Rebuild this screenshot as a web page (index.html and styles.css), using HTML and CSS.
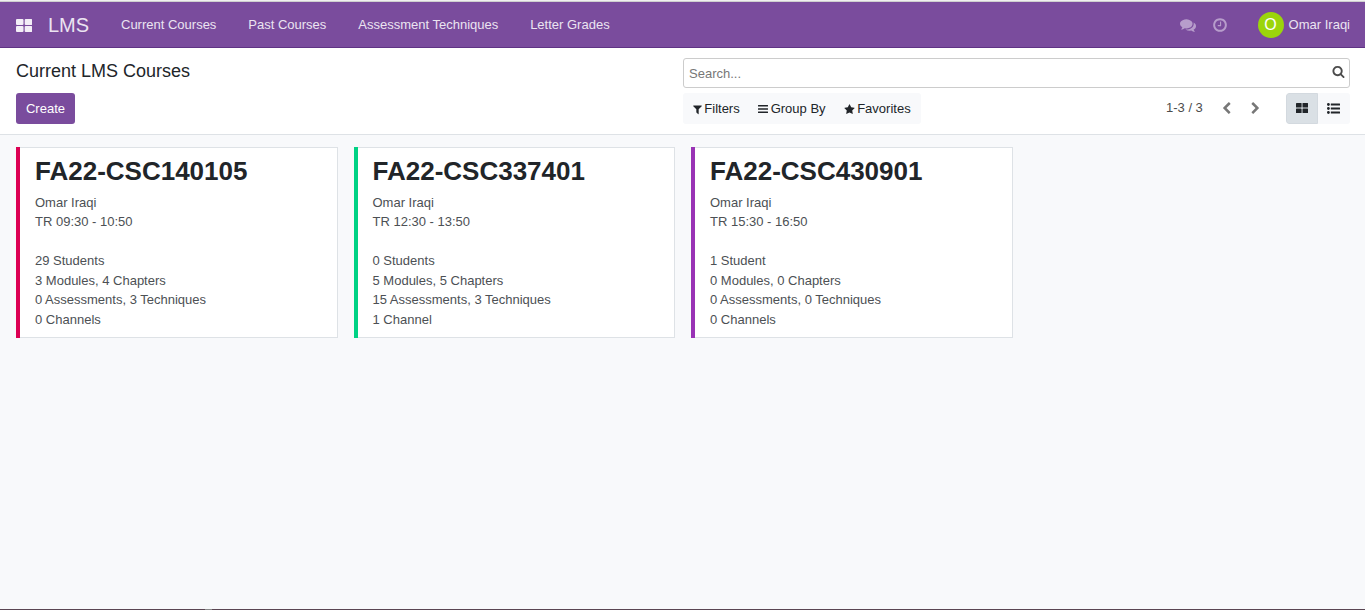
FILE: index.html
```html
<!DOCTYPE html>
<html lang="en">
<head>
<meta charset="utf-8">
<title>Current LMS Courses</title>
<link rel="stylesheet" href="styles.css">
</head>
<body>
<svg class="sprite" aria-hidden="true">
<symbol id="apps-grid" viewBox="0 0 16 13"><rect width="7.500" height="6" rx="1"/><rect x="8.700" width="7.500" height="6" rx="1"/><rect y="7" width="7.500" height="6" rx="1"/><rect x="8.700" y="7" width="7.500" height="6" rx="1"/></symbol>
<symbol id="view-grid" viewBox="0 0 12 10"><rect width="5.600" height="4.600" rx=".6"/><rect x="6.500" width="5.600" height="4.600" rx=".6"/><rect y="5.500" width="5.600" height="4.500" rx=".6"/><rect x="6.500" y="5.500" width="5.600" height="4.500" rx=".6"/></symbol>
<symbol id="comments" viewBox="0 0 1792 1792"><path d="M1408 768q0 139-94 257t-256.500 186.500-353.500 68.500q-86 0-176-16-124 88-278 128-36 9-86 16h-3q-11 0-20.500-8t-11.500-21q-1-3-1-6.500t.5-6.500 2-6l2.500-5 3.500-5.500 4-5 4.500-5 4-4.500q5-6 23-25t26-29.500 22.500-29 25-38.500 20.500-44q-124-72-195-177t-71-224q0-139 94-257t256.500-186.500 353.500-68.500 353.500 68.500 256.500 186.500 94 257zm384 256q0 120-71 224.500t-195 176.500q10 24 20.500 44t25 38.500 22.500 29 26 29.500 23 25q1 1 4 4.500t4.500 5 4 5 3.500 5.500l2.500 5 2 6 .5 6.500-1 6.500q-3 14-13 22t-22 7q-50-7-86-16-154-40-278-128-90 16-176 16-271 0-472-132 58 4 88 4 161 0 309-45t264-129q125-92 192-212t67-254q0-77-23-152 129 71 204 178t75 230z"/></symbol>
<symbol id="clock" viewBox="0 0 1792 1792"><path d="M1024 544v448q0 14-9 23t-23 9h-320q-14 0-23-9t-9-23v-64q0-14 9-23t23-9h224v-352q0-14 9-23t23-9h64q14 0 23 9t9 23zm416 352q0-148-73-273t-198-198-273-73-273 73-198 198-73 273 73 273 198 198 273 73 273-73 198-198 73-273zm224 0q0 209-103 385.500t-279.500 279.500-385.500 103-385.500-103-279.500-279.500-103-385.500 103-385.500 279.500-279.500 385.500-103 385.500 103 279.500 279.500 103 385.500z"/></symbol>
<symbol id="filter" viewBox="0 0 1792 1792"><path d="M1595 295q17 41-14 70l-493 493v742q0 42-39 59-13 5-25 5-27 0-45-19l-256-256q-19-19-19-45v-486l-493-493q-31-29-14-70 17-39 59-39h1280q42 0 59 39z"/></symbol>
<symbol id="lines" viewBox="0 0 10 10"><rect y="1" width="10" height="1.600" rx=".3"/><rect y="4.200" width="10" height="1.600" rx=".3"/><rect y="7.400" width="10" height="1.600" rx=".3"/></symbol>
<symbol id="star" viewBox="0 0 1792 1792"><path d="M1728 647q0 22-26 48l-363 354 86 500q1 7 1 20 0 21-10.500 35.500t-30.500 14.500q-19 0-40-12l-449-236-449 236q-22 12-40 12-21 0-31.500-14.500t-10.500-35.500q0-6 2-20l86-500-364-354q-25-27-25-48 0-37 56-46l502-73 225-455q19-41 49-41t49 41l225 455 502 73q56 9 56 46z"/></symbol>
<symbol id="search" viewBox="0 0 1792 1792"><path d="M1216 832q0-185-131.500-316.500t-316.500-131.500-316.500 131.500-131.500 316.500 131.500 316.500 316.500 131.500 316.500-131.500 131.500-316.500zm512 832q0 52-38 90t-90 38q-54 0-90-38l-343-342q-179 124-399 124-143 0-273.500-55.500t-225-150-150-225-55.500-273.500 55.500-273.500 150-225 225-150 273.500-55.500 273.500 55.500 225 150 150 225 55.500 273.500q0 220-124 399l343 343q37 37 37 90z"/></symbol>
<symbol id="chevron" viewBox="0 0 1792 1792"><path d="M1427 301l-531 531 531 531q19 19 19 45t-19 45l-166 166q-19 19-45 19t-45-19l-742-742q-19-19-19-45t19-45l742-742q19-19 45-19t45 19l166 166q19 19 19 45t-19 45z"/></symbol>
<symbol id="list" viewBox="0 0 13 11"><circle cx="1.400" cy="1.500" r="1.400"/><circle cx="1.400" cy="5.500" r="1.400"/><circle cx="1.400" cy="9.500" r="1.400"/><rect x="3.800" y=".6" width="9.200" height="1.800" rx=".2"/><rect x="3.800" y="4.600" width="9.200" height="1.800" rx=".2"/><rect x="3.800" y="8.600" width="9.200" height="1.800" rx=".2"/></symbol>
</svg>
<header class="navbar">
  <svg class="apps"><use href="#apps-grid"/></svg>
  <span class="brand">LMS</span>
  <nav class="menu"><a>Current Courses</a><a>Past Courses</a><a>Assessment Techniques</a><a>Letter Grades</a></nav>
  <div class="systray">
    <svg class="tray-icon"><use href="#comments"/></svg>
    <svg class="tray-icon"><use href="#clock"/></svg>
    <span class="avatar">O</span><span class="user">Omar Iraqi</span>
  </div>
</header>
<section class="control-panel">
  <div class="panel-left">
    <h1 class="title">Current LMS Courses</h1>
    <button class="create">Create</button>
  </div>
  <div class="panel-right">
    <div class="searchbox"><span>Search...</span><svg class="search-icon"><use href="#search"/></svg></div>
    <div class="tools">
      <div class="filters">
        <span class="filter"><svg class="filter-icon"><use href="#filter"/></svg>Filters</span>
        <span class="filter"><svg class="group-icon"><use href="#lines"/></svg>Group By</span>
        <span class="filter"><svg class="star-icon"><use href="#star"/></svg>Favorites</span>
      </div>
      <span class="pager">1-3 / 3</span>
      <svg class="chevron"><use href="#chevron"/></svg>
      <svg class="chevron next"><use href="#chevron"/></svg>
      <div class="views">
        <span class="view active"><svg class="grid-icon"><use href="#view-grid"/></svg></span>
        <span class="view"><svg class="list-icon"><use href="#list"/></svg></span>
      </div>
    </div>
  </div>
</section>
<main class="kanban">
  <article class="card red"><h2>FA22-CSC140105</h2><p>Omar Iraqi</p><p>TR 09:30 - 10:50</p><p class="spaced">29 Students</p><p>3 Modules, 4 Chapters</p><p>0 Assessments, 3 Techniques</p><p>0 Channels</p></article>
  <article class="card green"><h2>FA22-CSC337401</h2><p>Omar Iraqi</p><p>TR 12:30 - 13:50</p><p class="spaced">0 Students</p><p>5 Modules, 5 Chapters</p><p>15 Assessments, 3 Techniques</p><p>1 Channel</p></article>
  <article class="card purple"><h2>FA22-CSC430901</h2><p>Omar Iraqi</p><p>TR 15:30 - 16:50</p><p class="spaced">1 Student</p><p>0 Modules, 0 Chapters</p><p>0 Assessments, 0 Techniques</p><p>0 Channels</p></article>
</main>
<footer class="bottom-edge"><span class="edge-mark"></span></footer>
</body>
</html>
```
FILE: styles.css
```css
* { box-sizing: border-box; }
body {
  margin: 0;
  height: 610px;
  display: flex;
  flex-direction: column;
  overflow: hidden;
  background: #f8f9fb;
  color: #4c4c4c;
  font: 13px/19.5px "Liberation Sans", Arial, sans-serif;
}
svg { fill: currentColor; flex: none; display: block; overflow: visible; }
.sprite { display: none; }
.navbar {
  height: 48px;
  border-top: 1px solid #f0f0f0;
  border-bottom: 1px solid #5f3384;
  background: #7a4c9d;
  box-shadow: inset 0 1px #cfcfcf;
  display: flex;
  align-items: center;
  padding: 1px 15px 0 16px;
  color: #ebe4f1;
}
.apps { width: 16px; height: 13px; color: #f3eef7; margin-top: 2px; }
.brand { font-size: 20px; margin-left: 16px; margin-top: 2px; width: 41px; }
.menu { display: flex; gap: 31.93px; margin-left: 32px; }
.systray { margin-left: auto; display: flex; align-items: center; color: #ebe4f1; }
.tray-icon { width: 16px; height: 16px; margin-right: 16px; color: #b79dcb; }
.avatar {
  width: 26px;
  height: 26px;
  border-radius: 50%;
  background: #9bd50b;
  color: #fff;
  font-size: 16px;
  line-height: 26px;
  text-align: center;
  margin: 0 5px 0 14px;
}
.control-panel {
  height: 87px;
  flex: none;
  background: #fff;
  border-bottom: 1px solid #dee2e6;
  display: grid;
  grid-template-columns: 667px 667px;
  padding: 10px 16px 0;
}
.panel-left { display: flex; flex-direction: column; align-items: flex-start; }
.title { margin: 0; font-size: 18px; font-weight: 400; line-height: 27px; color: #212529; }
.create {
  margin-top: 8px;
  width: 59px;
  height: 31px;
  padding: 0;
  border: 0;
  border-radius: 3px;
  background: #7a4c9d;
  color: #fff;
  font: inherit;
}
.searchbox {
  height: 30px;
  border: 1px solid #ccc;
  border-radius: 3px;
  padding: 1px 4.5px 0 5px;
  display: flex;
  align-items: center;
  justify-content: space-between;
  color: #777;
}
.search-icon { width: 13px; height: 13px; color: #4c4c4c; margin-top: -4px; }
.tools { display: flex; align-items: center; height: 31px; margin-top: 5px; }
.filters {
  display: flex;
  align-items: center;
  width: 238px;
  height: 31px;
  background: #f8f9fb;
  border-radius: 3px;
  color: #212529;
  padding-left: 9px;
  gap: 18.4px;
}
.filter { display: flex; align-items: center; }
.filter-icon { width: 11px; height: 11px; margin: 2px 1.3px 0 0; }
.group-icon { width: 10px; height: 10px; margin: 1px 2.6px 0 0; }
.star-icon { width: 11px; height: 11px; margin: 1px 2.2px 0 0; }
.pager { margin-left: 245px; width: 38px; margin-top: -2px; white-space: nowrap; }
.chevron { width: 13px; height: 13px; margin-left: 16.4px; color: #777; }
.chevron.next { transform: scaleX(-1); margin-left: 15.6px; }
.views { display: flex; margin-left: auto; border-radius: 3px; overflow: hidden; color: #212529; }
.view { width: 32px; height: 31px; background: #f8f9fb; display: flex; align-items: center; justify-content: center; padding-right: 1px; }
.view.active { background: #dae0e5; border: 1px solid #d3d9df; border-radius: 3px 0 0 3px; padding-right: 0; }
.grid-icon { width: 12px; height: 10px; margin-bottom: 1px; }
.list-icon { width: 13px; height: 11px; }
.kanban {
  display: grid;
  grid-template-columns: repeat(3, 321.5px);
  grid-auto-rows: 191px;
  gap: 16px;
  padding: 12px 16px;
}
.card {
  position: relative;
  background: #fff;
  border: solid #dee2e6;
  border-width: 1px 1px 1px 0;
  padding: 8px 15px 8px 19px;
}
.card h2 { margin: 0 0 5.7px; font-size: 26px; line-height: 31px; color: #212529; }
.card p { margin: 0; color: #4c5054; }
.card .spaced { margin-top: 19.5px; }
/* The colour bar covers the full card height, border rows included. */
.card::before { content: ""; position: absolute; left: 0; top: -1px; bottom: -1px; width: 4px; }
.card.red::before { background: #dc0053; }
.card.green::before { background: #00d284; }
.card.purple::before { background: #9933b5; }
.bottom-edge { height: 1px; margin-top: auto; background: #5a4552; }
.edge-mark { display: block; width: 7px; height: 1px; margin-left: 205px; background: #898989; }
```
